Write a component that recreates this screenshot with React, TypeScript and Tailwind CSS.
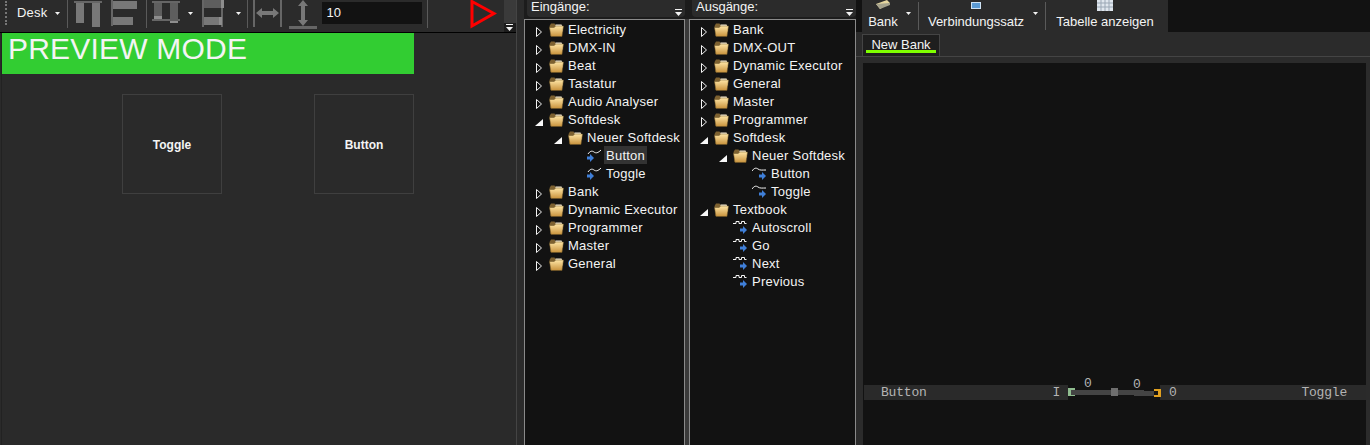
import React from 'react';

type Node = {
  label: string;
  depth: number;
  kind: 'closed' | 'open' | 'sine-in' | 'sine-out' | 'square';
  selected?: boolean;
};

const inputs: Node[] = [
  { label: 'Electricity', depth: 0, kind: 'closed' },
  { label: 'DMX-IN', depth: 0, kind: 'closed' },
  { label: 'Beat', depth: 0, kind: 'closed' },
  { label: 'Tastatur', depth: 0, kind: 'closed' },
  { label: 'Audio Analyser', depth: 0, kind: 'closed' },
  { label: 'Softdesk', depth: 0, kind: 'open' },
  { label: 'Neuer Softdesk', depth: 1, kind: 'open' },
  { label: 'Button', depth: 2, kind: 'sine-in', selected: true },
  { label: 'Toggle', depth: 2, kind: 'sine-in' },
  { label: 'Bank', depth: 0, kind: 'closed' },
  { label: 'Dynamic Executor', depth: 0, kind: 'closed' },
  { label: 'Programmer', depth: 0, kind: 'closed' },
  { label: 'Master', depth: 0, kind: 'closed' },
  { label: 'General', depth: 0, kind: 'closed' },
];

const outputs: Node[] = [
  { label: 'Bank', depth: 0, kind: 'closed' },
  { label: 'DMX-OUT', depth: 0, kind: 'closed' },
  { label: 'Dynamic Executor', depth: 0, kind: 'closed' },
  { label: 'General', depth: 0, kind: 'closed' },
  { label: 'Master', depth: 0, kind: 'closed' },
  { label: 'Programmer', depth: 0, kind: 'closed' },
  { label: 'Softdesk', depth: 0, kind: 'open' },
  { label: 'Neuer Softdesk', depth: 1, kind: 'open' },
  { label: 'Button', depth: 2, kind: 'sine-out' },
  { label: 'Toggle', depth: 2, kind: 'sine-out' },
  { label: 'Textbook', depth: 0, kind: 'open' },
  { label: 'Autoscroll', depth: 1, kind: 'square' },
  { label: 'Go', depth: 1, kind: 'square' },
  { label: 'Next', depth: 1, kind: 'square' },
  { label: 'Previous', depth: 1, kind: 'square' },
];

const depthPad = ['pl-[10px]', 'pl-[29px]', 'pl-[48px]'];

const Caret = () => (
  <svg width="5" height="3" viewBox="0 0 5 3">
    <path d="M0 0h5L2.500 3z" fill="#f2f2f2" />
  </svg>
);

const Sep = () => <div className="h-[28px] w-px bg-[#5a5a5a]" />;

const Folder = () => (
  <svg width="15" height="14" viewBox="0 0 15 14" className="mt-[2px] shrink-0">
    <defs>
      <linearGradient id="folder-front" x1="0" y1="0" x2="0" y2="1">
        <stop offset="0%" stopColor="#ffe6a6" />
        <stop offset="100%" stopColor="#c8923c" />
      </linearGradient>
    </defs>
    <path d="M0.500 3 2 0.500h3.500l1 1.500H13v11H1.500z" fill="#7d6130" />
    <path d="M6.500 1.500h6l1.500 3v4H6.500z" fill="#f7ecd0" />
    <path
      d="M0.500 4.500h4.500l2-1.500h7.500L13 13.500H2z"
      fill="url(#folder-front)"
      stroke="#6d5526"
      strokeWidth="0.500"
    />
  </svg>
);

const Expander = ({ open }: { open: boolean }) => (
  <span className="flex w-[14px] shrink-0 items-center">
    {open ? (
      <svg width="8" height="7" viewBox="0 0 8 7" className="mt-[6px]">
        <path d="M8 0V7H0z" fill="#f8f8f8" />
      </svg>
    ) : (
      <svg width="8" height="10" viewBox="0 0 8 10" className="mt-[5px]">
        <path d="M1.500 0.500 6.500 5 1.500 9.500z" fill="none" stroke="#f2f2f2" />
      </svg>
    )}
  </span>
);

const Arrow = ({ x, y }: { x: number; y: number }) => (
  <path
    transform={`translate(${x} ${y})`}
    d="M0 2.500h3V0l4 4-4 4V5.500H0z"
    fill="#3f7fd8"
  />
);

const SignalIcon = ({ kind }: { kind: Node['kind'] }) => (
  <svg width="15" height="14" viewBox="0 0 15 14" className="shrink-0">
    {kind === 'square' ? (
      <path d="M0 3.500h3v-2h3v2h2.500v-2h3v2h2" fill="none" stroke="#f4f4f4" />
    ) : kind === 'sine-in' ? (
      <path d="M1 6c2-3 4-3.500 6-2s4 1 7-2" fill="none" stroke="#f4f4f4" />
    ) : (
      <path d="M0 5c2-3 4-3.500 6-2s4 1 8 1" fill="none" stroke="#f4f4f4" />
    )}
    {kind === 'sine-in' ? <Arrow x={0} y={6} /> : <Arrow x={7} y={6} />}
  </svg>
);

const Row = ({ node }: { node: Node }) => {
  const isFolder = node.kind === 'closed' || node.kind === 'open';
  return (
    <div className={`flex h-[18px] items-center ${depthPad[node.depth]}`}>
      {isFolder ? <Expander open={node.kind === 'open'} /> : <span className="w-[14px] shrink-0" />}
      {isFolder ? <Folder /> : <SignalIcon kind={node.kind} />}
      <span
        className={`ml-[2px] box-border h-[18px] whitespace-nowrap px-[2px] pt-px leading-[18px] ${node.selected ? 'bg-[#333333]' : ''}`}
      >
        {node.label}
      </span>
    </div>
  );
};

const MiniGrip = () => (
  <svg width="8" height="8" viewBox="0 0 8 8">
    <path d="M0 0h7v1H0zM0 3h7L3.500 7z" fill="#f2f2f2" />
  </svg>
);

const TreePanel = ({ title, nodes, width }: { title: string; nodes: Node[]; width: string }) => (
  <div className={`flex h-full flex-col ${width}`}>
    <div className="h-[19px] shrink-0 bg-[#1c1c1c] pl-[3px]">
      <div className="flex h-[17px] items-start justify-between rounded-b-sm bg-[#2b2b2b] pl-[4px]">
        <span className="text-[13px] leading-[14px]">{title}</span>
        <span className="mt-[9px] mr-[2px] flex h-[8px]">
          <MiniGrip />
        </span>
      </div>
    </div>
    <div className="flex-1 border border-b-0 border-[#8a8a8a] bg-[#121212] text-[13px] tracking-[0.25px]">
      {nodes.map((n) => (
        <Row key={n.label + n.depth} node={n} />
      ))}
    </div>
  </div>
);

const Grey = '#787878';

const AlignTop = () => (
  <svg width="30" height="28" viewBox="0 0 30 28">
    <rect x="0" y="1" width="28" height="2" fill="#666" />
    <rect x="2" y="3" width="8" height="20" fill={Grey} />
    <rect x="18" y="3" width="8" height="24" fill={Grey} />
  </svg>
);

const AlignLeft = () => (
  <svg width="28" height="28" viewBox="0 0 28 28">
    <rect x="0" y="0" width="2" height="26" fill="#666" />
    <rect x="2" y="1" width="24" height="8" fill={Grey} />
    <rect x="2" y="17" width="20" height="8" fill={Grey} />
  </svg>
);

const DistV = () => (
  <svg width="28" height="24" viewBox="0 0 28 24">
    <rect x="0" y="1" width="28" height="2" fill="#666" />
    <rect x="0" y="19" width="28" height="2" fill="#666" />
    <rect x="2" y="3" width="8" height="16" fill="#5e5e5e" />
    <rect x="2" y="16" width="8" height="3" fill="#8e8e8e" />
    <rect x="18" y="3" width="8" height="18" fill="#5e5e5e" />
    <rect x="18" y="21" width="8" height="2" fill="#8e8e8e" />
  </svg>
);

const DistH = () => (
  <svg width="22" height="28" viewBox="0 0 22 28">
    <rect x="0" y="0" width="2" height="27" fill="#666" />
    <rect x="19" y="0" width="2" height="27" fill="#666" />
    <rect x="2" y="0" width="17" height="8" fill="#5e5e5e" />
    <rect x="19" y="0" width="3" height="8" fill="#8e8e8e" />
    <rect x="2" y="17" width="17" height="8" fill={Grey} />
    <rect x="17" y="17" width="3" height="8" fill="#8e8e8e" />
  </svg>
);

const SizeW = () => (
  <svg width="31" height="28" viewBox="0 0 31 28">
    <rect x="1" y="0" width="2" height="27" fill="#666" />
    <rect x="28" y="0" width="2" height="27" fill="#666" />
    <path d="M4 13 10 8v3h11V8l6 5-6 5v-3H10v3z" fill="#787878" />
  </svg>
);

const SizeH = () => (
  <svg width="28" height="29" viewBox="0 0 28 29">
    <rect x="0" y="26" width="28" height="3" fill="#666" />
    <path d="M14 0l5 6h-3v14h3l-5 6-5-6h3V6H9z" fill="#787878" />
  </svg>
);

const Overflow = () => (
  <div className="flex h-full w-[12px] flex-col">
    <div className="h-[23px] bg-[#3a3a3a]" />
    <div className="flex h-[9px] items-center justify-center bg-[#1c1c1c]">
      <MiniGrip />
    </div>
  </div>
);

const LeftPanel = () => (
  <div className="flex h-full w-[517px] shrink-0 flex-col border-r border-[#444444] bg-[#2a2a2a]">
    <div className="flex h-[32px] shrink-0 items-start bg-[#2b2b2b]">
      <div className="mt-[1px] ml-[5px] h-[24px] w-[3px] border-l-2 border-dotted border-[#777777]" />
      <span className="mt-[5px] ml-[9px] text-[13px] leading-[16px] tracking-[0.2px]">Desk</span>
      <span className="mt-[12px] ml-[8px] flex"><Caret /></span>
      <span className="ml-[7px]"><Sep /></span>
      <span className="ml-[6px]"><AlignTop /></span>
      <span className="ml-[7px]"><AlignLeft /></span>
      <span className="ml-[7px]"><Sep /></span>
      <span className="ml-[5px]"><DistV /></span>
      <span className="mt-[12px] ml-[8px] flex"><Caret /></span>
      <span className="ml-[9px]"><DistH /></span>
      <span className="mt-[12px] ml-[12px] flex"><Caret /></span>
      <span className="ml-[6px]"><Sep /></span>
      <span className="ml-[4px]"><SizeW /></span>
      <span className="ml-[6px]"><SizeH /></span>
      <div className="mt-[2px] ml-[5px] h-[22px] w-[100px] bg-[#121212] pl-[4px] text-[13px] leading-[22px]">10</div>
      <span className="ml-[5px]"><Sep /></span>
      <svg width="28" height="29" viewBox="0 0 28 29" className="ml-[42px]">
        <path d="M2 1.500 24 13.500 2 26z" fill="none" stroke="#ff0000" strokeWidth="3" />
      </svg>
      <div className="ml-[6px] h-full"><Overflow /></div>
    </div>
    <div className="h-px shrink-0 bg-black" />
    <div className="ml-px flex-1 border-l border-[#222222]">
      <div className="flex h-[41px] w-[412px] items-center bg-[#32cd32] pb-[11px] pl-[6px] text-[30px] tracking-[0.2px]">PREVIEW MODE</div>
      <div className="mt-[20px] ml-[120px] flex gap-[92px] text-[12px] font-bold">
        <div className="flex size-[100px] items-center justify-center border border-[#3f3f3f] pt-[2px]">Toggle</div>
        <div className="flex size-[100px] items-center justify-center border border-[#3f3f3f] pt-[2px]">Button</div>
      </div>
    </div>
  </div>
);

const ToolButton = ({ label, width, caret, children }: { label: string; width: string; caret?: boolean; children: React.ReactNode }) => (
  <div className={`relative box-border flex h-full flex-col items-center ${width}`}>
    <div className="flex h-[14px] items-start justify-center">{children}</div>
    <span className="text-[13px] leading-[15px]">{label}</span>
    {caret && <span className="absolute top-[12px] right-[7px] flex"><Caret /></span>}
  </div>
);

const RightPanel = () => (
  <div className="flex h-full flex-1 flex-col bg-[#2b2b2b]">
    <div className="flex h-[32px] shrink-0 bg-[#121212]">
      <div className="ml-[6px] flex h-full items-center bg-[#2b2b2b]">
        <ToolButton label="Bank" width="w-[56px] pr-[14px]" caret>
          <svg width="16" height="9" viewBox="0 0 16 9">
            <path d="M1 4 12 0l3 3-2 1-8 5z" fill="#e6d7a0" />
            <path d="M1 4l4 5 10-4v-2z" fill="#a5a28c" />
          </svg>
        </ToolButton>
        <Sep />
        <ToolButton label="Verbindungssatz" width="w-[126px] pr-[12px]" caret>
          <svg width="10" height="7" viewBox="0 0 10 7" className="mt-[2px]">
            <rect width="10" height="7" fill="#cfe3f5" />
            <rect x="1" y="1" width="8" height="5" fill="#5b9bd5" />
          </svg>
        </ToolButton>
        <Sep />
        <ToolButton label="Tabelle anzeigen" width="w-[122px] pr-[4px]">
          <svg width="16" height="11" viewBox="0 0 16 11">
            <rect width="16" height="11" fill="#dfe6ee" />
            <path d="M4 0v11M8 0v11M12 0v11M0 3h16M0 7h16" stroke="#9aa7b5" />
          </svg>
        </ToolButton>
      </div>
    </div>
    <div className="mt-px flex h-[24px] shrink-0 items-end border-b border-[#444444] pl-[6px]">
      <div className="relative h-[22px] w-[78px] border border-b-0 border-[#444444] bg-[#1e1e1e] text-center text-[13px] leading-[20px]">
        New Bank
        <div className="absolute top-[15px] left-[3px] h-[3px] w-[70px] bg-[#7fff00]" />
      </div>
    </div>
    <div className="ml-[7px] mt-[6px] mr-[4px] flex-1 bg-[#121212] pt-[322px]">
      <div className="flex h-[15px] font-['Liberation_Mono',monospace] text-[13px] leading-[15px] tracking-[-0.2px] text-[#b4b4b4]">
        <div className="ml-px flex w-[204px] justify-between bg-[#2a2a2a] pr-[8px] pl-[17px]">
          <span>Button</span>
          <span>I</span>
        </div>
        <div className="relative w-[92px]">
          <svg width="94" height="14" viewBox="0 0 94 14" className="absolute top-[2px] left-0">
            <rect x="0" y="1" width="7" height="8" fill="#8fbc8f" />
            <rect x="3" y="3" width="40" height="5" fill="#444444" />
            <rect x="50" y="3" width="26" height="5" fill="#444444" />
            <rect x="66" y="4" width="20" height="5" fill="#444444" />
            <rect x="43" y="1" width="7" height="8" fill="#6e6e6e" />
            <path d="M86 2h7v8h-7V8h4V4h-4z" fill="#e0a020" />
          </svg>
          <span className="absolute -top-[9px] left-[16px]">0</span>
          <span className="absolute -top-[8px] left-[65px]">0</span>
        </div>
        <div className="flex flex-1 justify-between bg-[#2a2a2a] pr-[19px] pl-[9px]">
          <span>0</span>
          <span>Toggle</span>
        </div>
      </div>
    </div>
  </div>
);

export default function App() {
  return (
    <div className="flex h-[445px] w-[1370px] overflow-hidden bg-[#2b2b2b] font-['Liberation_Sans',Arial,sans-serif] text-[#f4f4f4]">
      <LeftPanel />
      <div className="flex h-full w-[339px] shrink-0 pl-[7px]">
        <TreePanel title="Eingänge:" nodes={inputs} width="w-[161px]" />
        <div className="flex w-[4px] flex-col">
          <div className="h-[19px] bg-[#1c1c1c]" />
          <div className="flex-1 bg-[#3a3a3a]" />
        </div>
        <TreePanel title="Ausgänge:" nodes={outputs} width="w-[167px]" />
      </div>
      <RightPanel />
    </div>
  );
}
